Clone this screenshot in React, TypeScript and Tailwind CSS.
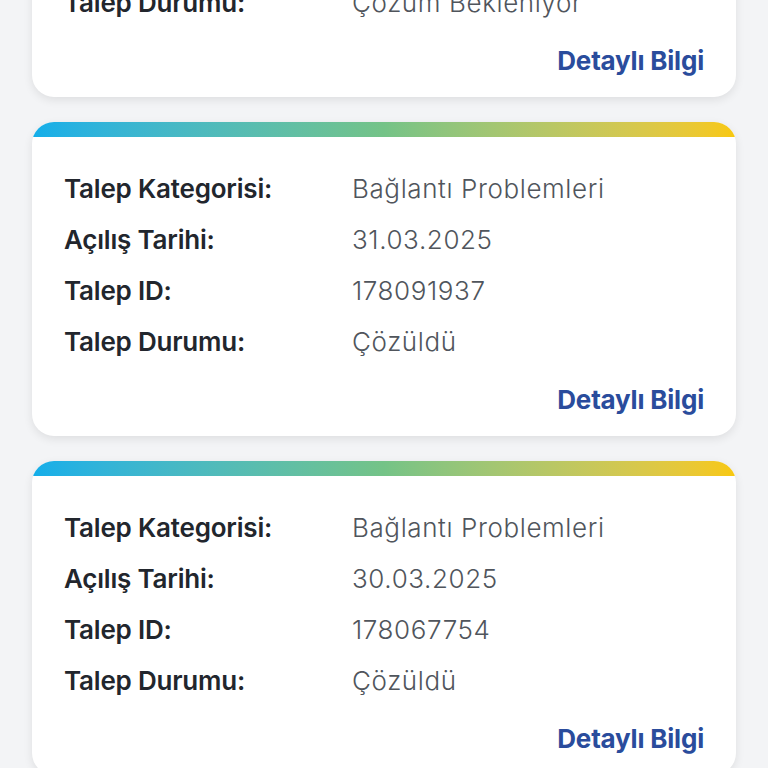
import React from 'react';

type Ticket = {
  category: string;
  date: string;
  id: string;
  status: string;
};

const tickets: Ticket[] = [
  { category: 'Bağlantı Problemleri', date: '01.04.2025', id: '178104412', status: 'Çözüm Bekleniyor' },
  { category: 'Bağlantı Problemleri', date: '31.03.2025', id: '178091937', status: 'Çözüldü' },
  { category: 'Bağlantı Problemleri', date: '30.03.2025', id: '178067754', status: 'Çözüldü' },
];

function TicketCard({ ticket }: { ticket: Ticket }) {
  const rows = [
    ['Talep Kategorisi:', ticket.category],
    ['Açılış Tarihi:', ticket.date],
    ['Talep ID:', ticket.id],
    ['Talep Durumu:', ticket.status],
  ];

  return (
    <div className="h-[314px] shrink-0 rounded-[22px] bg-white shadow-[0_3px_10px_rgba(0,0,0,0.09)] overflow-hidden flex flex-col">
      {/* top gradient strip */}
      <div className="h-[15px] shrink-0 bg-gradient-to-r from-[#12aeea] via-[#74c387] to-[#f8c80b]" />
      <div className="flex-1 flex flex-col pt-[26px] pl-8 pr-8">
        {rows.map(([label, value]) => (
          <div key={label} className="flex h-[51px] items-center">
            <span className="w-[288px] shrink-0 text-[26px] font-semibold text-[#22262d] tracking-[-0.2px]">{label}</span>
            <span className="text-[26px] font-light text-[#50555c] tracking-[0.6px]">{value}</span>
          </div>
        ))}
        <div className="flex justify-end pt-[13px]">
          <button className="text-[26px] font-bold text-[#2a4c9c] tracking-[-0.2px]">Detaylı Bilgi</button>
        </div>
      </div>
    </div>
  );
}

export default function App() {
  return (
    <div
      className="h-[768px] w-[768px] overflow-hidden bg-[#f3f4f6]"
      style={{ fontFamily: 'Inter, "Noto Sans", sans-serif' }}
    >
      <div className="-mt-[217px] flex flex-col gap-[25px] px-8">
        {tickets.map((t) => (
          <TicketCard key={t.id} ticket={t} />
        ))}
      </div>
    </div>
  );
}
